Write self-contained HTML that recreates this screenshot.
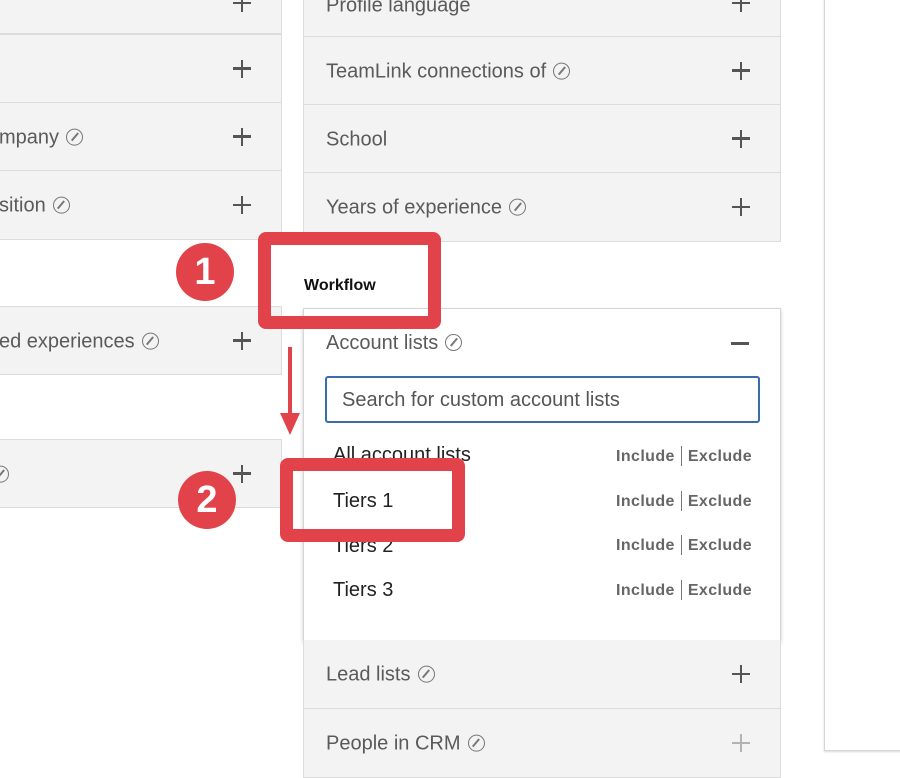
<!DOCTYPE html>
<html><head><style>
body{margin:0;width:900px;height:774px;background:#fff;position:relative;overflow:hidden;font-family:"Liberation Sans",sans-serif}
.r{position:absolute;background:#f3f3f4;border:1px solid #dcdcdc;box-sizing:border-box;color:#5a5a5a;font-size:20px}
.r .t{position:absolute;left:22px;top:50%;transform:translateY(-45%);white-space:nowrap}
.p{position:absolute;right:30px;top:50%;transform:translateY(-50%);width:18px;height:18px}
.p:before,.p:after{content:"";position:absolute;background:#555}
.p:before{left:0;top:7.5px;width:18px;height:2.5px}
.p:after{left:7.5px;top:0;width:2.5px;height:18px}
.ic{display:inline-block;width:17px;height:17px;border:1.5px solid #777;border-radius:50%;vertical-align:-2px;margin-left:7px;position:relative;box-sizing:border-box}
.ic:after{content:"";position:absolute;left:6.5px;top:2px;width:1.5px;height:10px;background:#777;transform:rotate(40deg)}
.inc{position:absolute;right:28px;font-size:16px;font-weight:bold;color:#666;letter-spacing:.4px}
.inc span{display:inline-block;width:1px;height:20px;background:#777;vertical-align:-5px;margin:0 6px}
.it{position:absolute;left:29px;font-size:20px;color:#222}
.red{position:absolute;border:13px solid #e2434a;border-radius:8px;box-sizing:border-box}
.c{position:absolute;width:58px;height:58px;border-radius:50%;background:#e2434a;color:#fff;font-weight:bold;font-size:38px;text-align:center;line-height:58px}
</style></head><body>
<div class="r" style="left:-2px;top:-2px;width:284px;height:36px"><div class="p" style="top:4px"></div></div>
<div class="r" style="left:-2px;top:34px;width:284px;height:69px"><div class="p"></div></div>
<div class="r" style="left:-2px;top:102px;width:284px;height:69px"><span class="t" style="left:0">mpany<i class="ic"></i></span><div class="p"></div></div>
<div class="r" style="left:-2px;top:170px;width:284px;height:70px"><span class="t" style="left:0">sition<i class="ic"></i></span><div class="p"></div></div>
<div class="r" style="left:-2px;top:306px;width:284px;height:69px"><span class="t" style="left:0">ed experiences<i class="ic"></i></span><div class="p"></div></div>
<div class="r" style="left:-2px;top:439px;width:284px;height:69px"><span class="t" style="left:-14px"><i class="ic"></i></span><div class="p"></div></div>

<div class="r" style="left:303px;top:-2px;width:478px;height:39px"><span class="t" style="top:6px">Profile language</span><div class="p" style="top:4px"></div></div>
<div class="r" style="left:303px;top:36px;width:478px;height:69px"><span class="t">TeamLink connections of<i class="ic"></i></span><div class="p"></div></div>
<div class="r" style="left:303px;top:104px;width:478px;height:69px"><span class="t">School</span><div class="p"></div></div>
<div class="r" style="left:303px;top:172px;width:478px;height:70px"><span class="t">Years of experience<i class="ic"></i></span><div class="p"></div></div>

<div style="position:absolute;left:304px;top:277px;font-size:16px;font-weight:bold;color:#111">Workflow</div>

<div style="position:absolute;left:303px;top:308px;width:478px;height:333px;background:#fff;border:1px solid #d5d5d5;box-sizing:border-box;box-shadow:0 2px 4px rgba(0,0,0,.2)">
<div style="position:absolute;left:22px;top:23px;font-size:20px;color:#5a5a5a">Account lists<i class="ic"></i></div>
<div style="position:absolute;left:427px;top:33px;width:18px;height:2.5px;background:#555"></div>
<div style="position:absolute;left:21px;top:67px;width:435px;height:47px;border:2px solid #3a6ea8;border-radius:3px;box-sizing:border-box;font-size:20px;color:#555;padding:11px 0 0 15px">Search for custom account lists</div>
<div class="it" style="top:135px">All account lists</div><div class="inc" style="top:137px">Include<span></span>Exclude</div>
<div class="it" style="top:181px">Tiers 1</div><div class="inc" style="top:182px">Include<span></span>Exclude</div>
<div class="it" style="top:226px">Tiers 2</div><div class="inc" style="top:226px">Include<span></span>Exclude</div>
<div class="it" style="top:270px">Tiers 3</div><div class="inc" style="top:271px">Include<span></span>Exclude</div>
</div>
<div class="r" style="left:303px;top:640px;width:478px;height:69px;border-top:none"><span class="t">Lead lists<i class="ic"></i></span><div class="p"></div></div>
<div class="r" style="left:303px;top:708px;width:478px;height:70px"><span class="t">People in CRM<i class="ic"></i></span><div class="p" style="opacity:.4"></div></div>

<div style="position:absolute;left:824px;top:-2px;width:90px;height:753px;border:1px solid #d5d5d5;box-sizing:border-box;background:#fff;box-shadow:0 1px 2px rgba(0,0,0,.15)"></div>

<div class="red" style="left:258px;top:232px;width:183px;height:97px"></div>
<div class="red" style="left:280px;top:458px;width:185px;height:84px"></div>
<div class="c" style="left:176px;top:243px">1</div>
<div class="c" style="left:178px;top:471px">2</div>
<svg style="position:absolute;left:275px;top:345px" width="30" height="92"><line x1="15" y1="2" x2="15" y2="75" stroke="#e2434a" stroke-width="4"/><polygon points="5,68 25,68 15,90" fill="#e2434a"/></svg>
</body></html>
